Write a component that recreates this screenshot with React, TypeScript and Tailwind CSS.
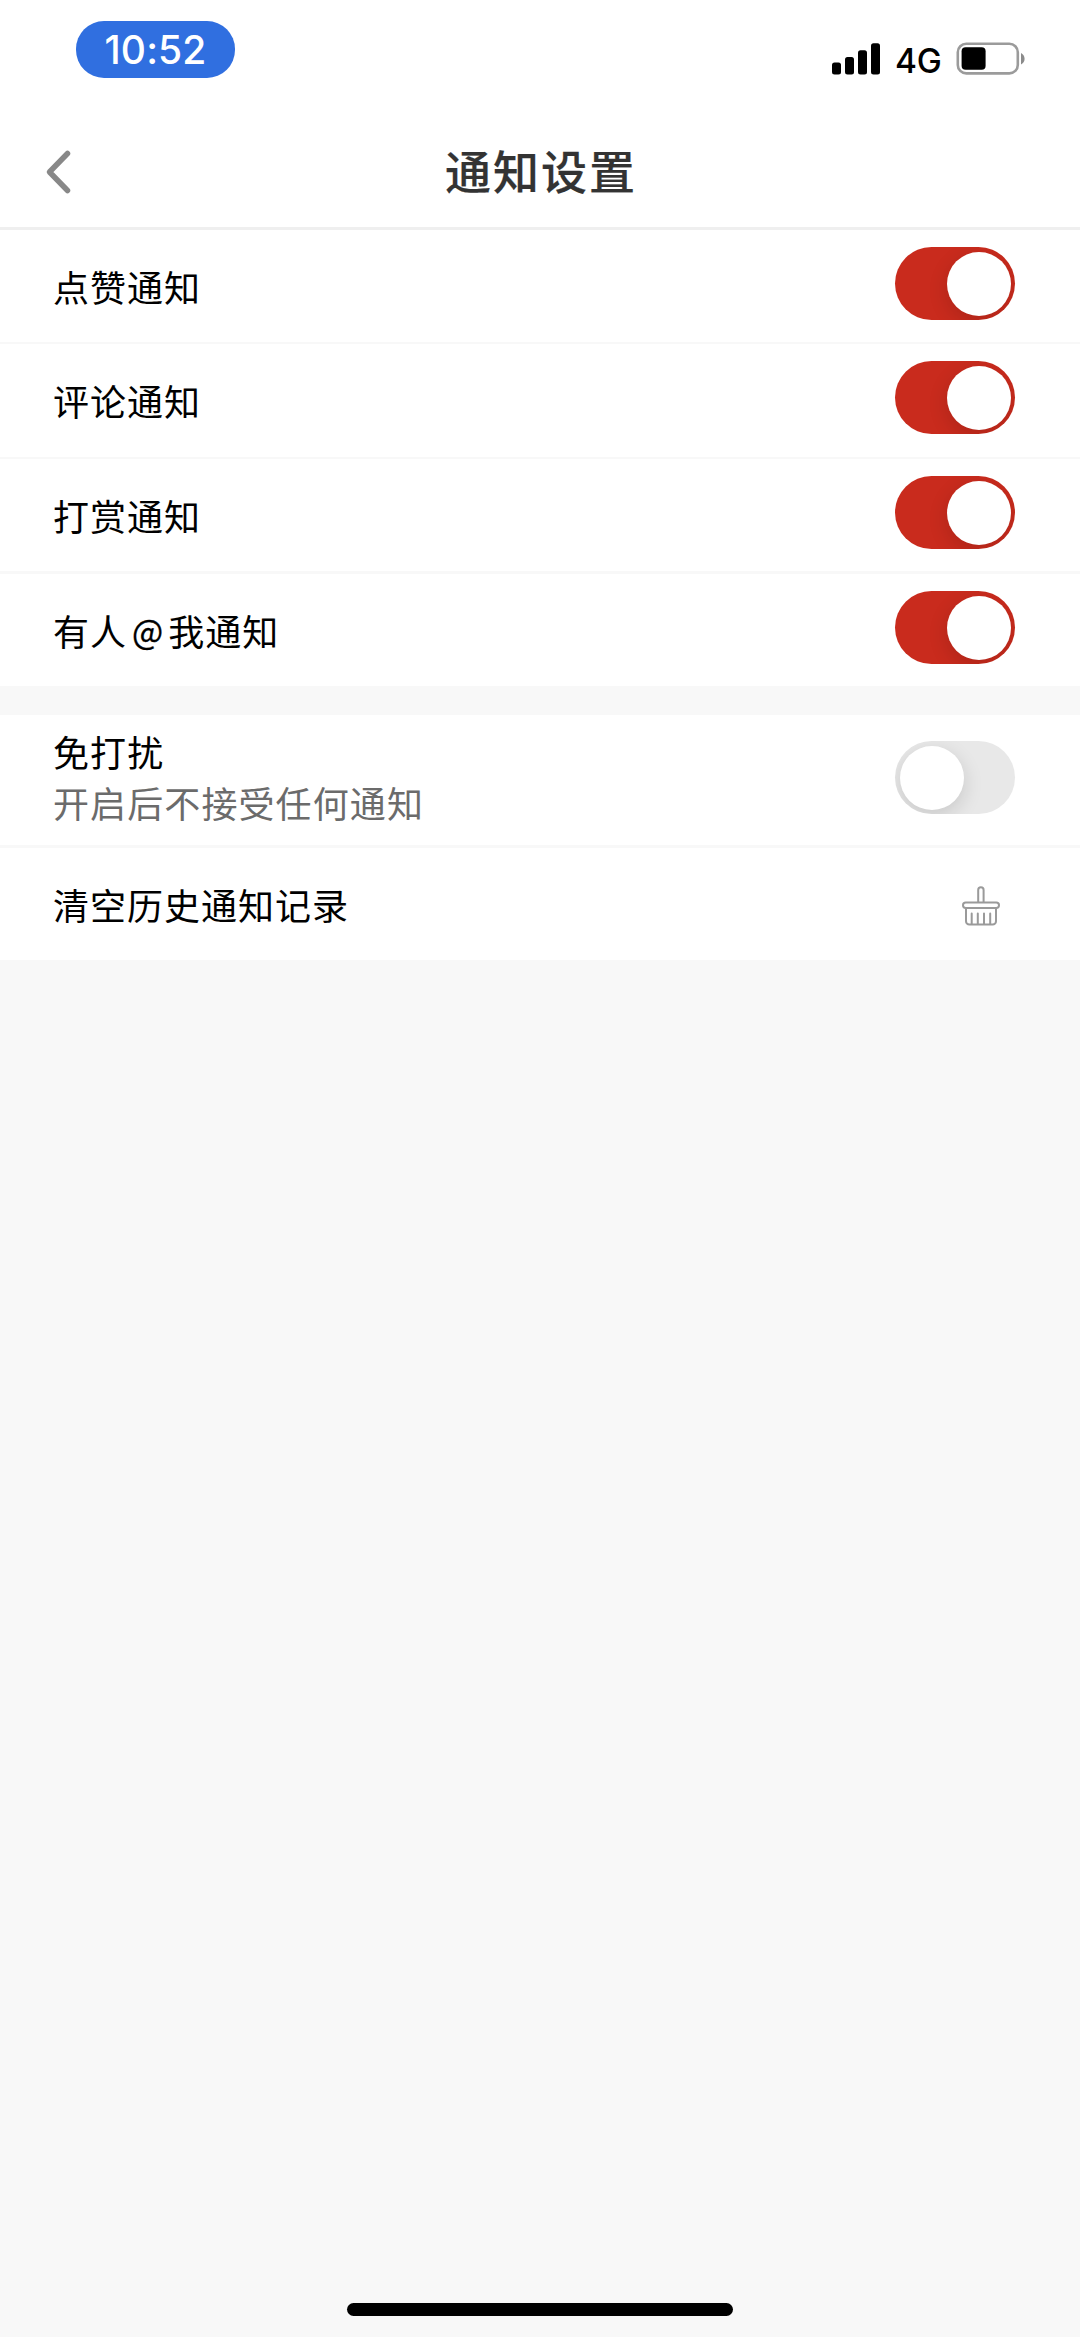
import { useState } from "react";
import type { ReactNode } from "react";

interface ToggleProps {
  checked: boolean;
  onChange: () => void;
}

const Toggle = ({ checked, onChange }: ToggleProps) => {
  return (
    <button
      role="switch"
      aria-checked={checked}
      onClick={onChange}
      className={`flex h-[73px] w-[120px] shrink-0 items-center overflow-hidden rounded-[36.5px] px-[4.5px] ${
        checked ? "justify-end bg-[#c92b1d]" : "justify-start bg-[#e8e8e8]"
      }`}
    >
      <span className="size-[64px] rounded-full bg-white shadow-[0_6px_20px_rgba(0,0,0,0.14)]" />
    </button>
  );
};

const SignalIcon = () => (
  <svg width="49" height="32" viewBox="0 0 49 32">
    <rect x="0" y="19.5" width="9" height="12" rx="2.5" />
    <rect x="13" y="14" width="9" height="17.5" rx="2.5" />
    <rect x="26" y="7.3" width="9" height="24.2" rx="2.5" />
    <rect x="39" y="0.3" width="9" height="31.2" rx="2.5" />
  </svg>
);

const BatteryIcon = () => (
  <svg width="70" height="34" viewBox="0 0 70 34" fill="none">
    <rect
      x="1.8"
      y="1.8"
      width="60"
      height="29.6"
      rx="8.5"
      stroke="#9b9b9b"
      strokeWidth="2.6"
    />
    <rect x="5.6" y="5.2" width="24" height="22.6" rx="4" fill="#000" />
    <path d="M65 11v11.5c2-.9 3.6-3 3.6-5.7S67 11.9 65 11z" fill="#8b8b8b" />
  </svg>
);

const BackIcon = () => (
  <svg width="30" height="46" viewBox="0 0 30 46" fill="none">
    <path
      d="M23.5 4.5L5.5 23L23.5 41.5"
      stroke="#888"
      strokeWidth="5.5"
      strokeLinecap="round"
      strokeLinejoin="round"
    />
  </svg>
);

const BroomIcon = () => (
  <svg
    width="38"
    height="40"
    viewBox="0 0 38 40"
    fill="none"
    stroke="#9a9a9a"
    strokeWidth="2"
    strokeLinecap="round"
  >
    <path d="M16.2 16V4a2.7 2.7 0 0 1 5.4 0V16" />
    <rect x="1" y="16.5" width="36" height="5.4" rx="2.7" />
    <path d="M4 22V35.2a3.3 3.3 0 0 0 3.3 3.3H30.7a3.3 3.3 0 0 0 3.3-3.3V22" />
    <path d="M9.7 27.5V38M15.8 27.5V38M22 27.5V38M28.2 27.5V38" />
  </svg>
);

interface NotificationRow {
  id: string;
  label: ReactNode;
  row: string;
}

const NOTIFICATIONS: NotificationRow[] = [
  { id: "like", label: "点赞通知", row: "h-[114px] border-b-2" },
  { id: "comment", label: "评论通知", row: "h-[115px] border-b-2" },
  { id: "reward", label: "打赏通知", row: "h-[115px] border-b-[3px]" },
  {
    id: "mention",
    label: (
      <>
        有人
        <span className="relative -top-[2px] mr-[4px] ml-[5px] text-[33px] leading-none [-webkit-text-stroke:0.3px_#000]">
          @
        </span>
        我通知
      </>
    ),
    row: "h-[112px]",
  },
];

export default function App() {
  const [enabled, setEnabled] = useState<Record<string, boolean>>({
    like: true,
    comment: true,
    reward: true,
    mention: true,
    mute: false,
  });

  const toggle = (id: string) => {
    setEnabled((prev) => ({ ...prev, [id]: !prev[id] }));
  };

  return (
    <main className="flex h-[2337px] w-[1080px] flex-col bg-[#f8f8f8] font-['Noto_Sans_CJK_SC',sans-serif] text-black">
      <section className="flex h-[115px] items-start justify-between bg-white pt-[21px] pr-[54px] pl-[76px] font-[Inter,sans-serif]">
        <p className="flex h-[57px] w-[159px] items-center justify-center rounded-[28px] bg-[#306fe0] pt-px text-[39px] font-medium tracking-[0.1px] text-white">
          10:52
        </p>
        <section className="mt-[21px] flex h-[34px] items-center">
          <SignalIcon />
          <p className="ml-[14px] w-[47px] pt-[3px] text-[33.5px] leading-[34px] font-medium tracking-[-0.3px]">
            4G
          </p>
          <span className="ml-[14px]">
            <BatteryIcon />
          </span>
        </section>
      </section>

      <header className="grid h-[115px] grid-cols-[90px_1fr_90px] items-center border-b-[3px] border-[#efefef] bg-white">
        <button className="pt-[2px] pl-[44px]">
          <BackIcon />
        </button>
        <h1 className="pb-[4px] pl-[2px] text-center text-[46px] leading-[60px] font-medium tracking-[2px] text-[#333] [-webkit-text-stroke:0.2px_#333]">
          通知设置
        </h1>
      </header>

      <section className="bg-white">
        {NOTIFICATIONS.map(({ id, label, row }) => (
          <section
            key={id}
            className={`flex items-start justify-between border-[#f8f8f8] pt-[17px] pr-[65px] pl-[53px] ${row}`}
          >
            <p className="mt-[12px] text-[36px] leading-[54px] tracking-[1px]">
              {label}
            </p>
            <Toggle checked={enabled[id]} onChange={() => toggle(id)} />
          </section>
        ))}
      </section>

      <section className="mt-[29px] bg-white">
        <section className="flex h-[133px] items-start justify-between border-b-[3px] border-[#f8f8f8] pr-[65px] pl-[53px]">
          <section className="pt-[11px] text-[36px] leading-[51px] tracking-[1.1px]">
            <p>免打扰</p>
            <p className="text-[#6b6b6b]">开启后不接受任何通知</p>
          </section>
          <section className="pt-[26px]">
            <Toggle checked={enabled.mute} onChange={() => toggle("mute")} />
          </section>
        </section>
        <button className="flex h-[112px] w-full items-start justify-between pr-[80px] pl-[53px] text-left">
          <span className="mt-[29px] text-[36px] leading-[54px] tracking-[1px]">
            清空历史通知记录
          </span>
          <span className="pt-[38px]">
            <BroomIcon />
          </span>
        </button>
      </section>

      <footer className="mt-auto flex justify-center pb-[21px]">
        <span className="h-[13px] w-[386px] rounded-full bg-black" />
      </footer>
    </main>
  );
}
